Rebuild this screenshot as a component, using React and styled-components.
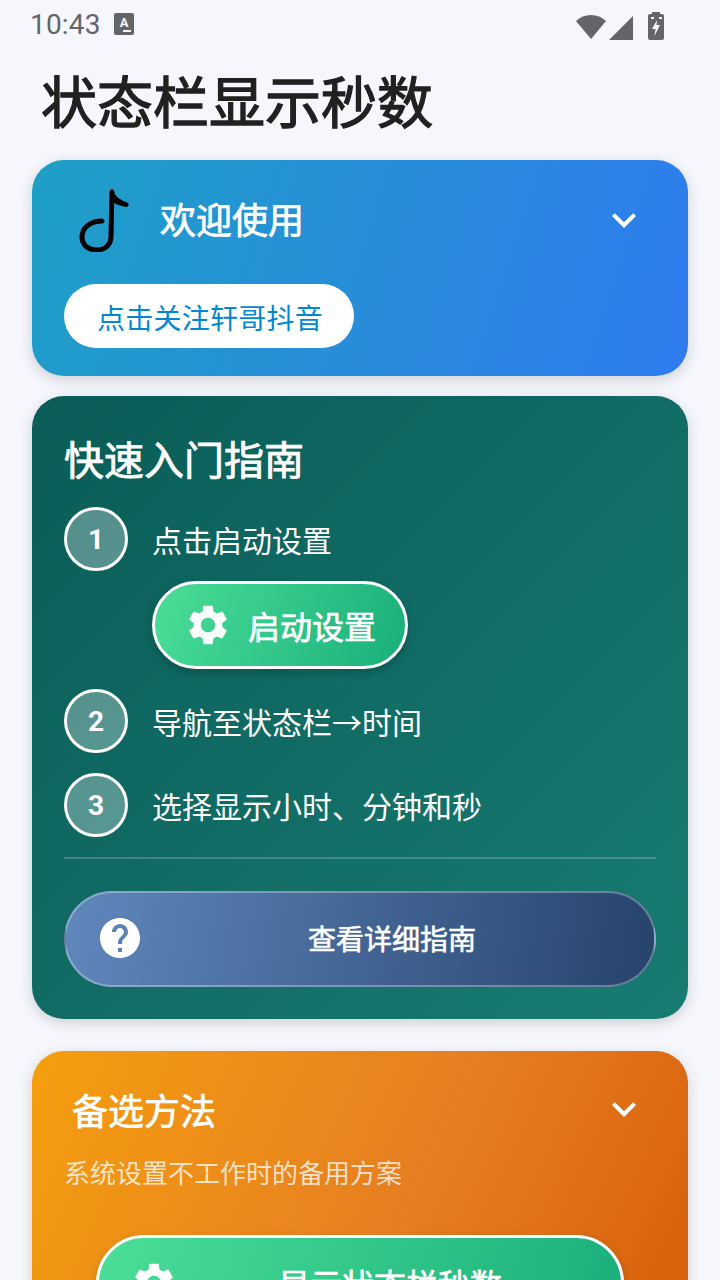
import React from 'react';
import styled, { createGlobalStyle } from 'styled-components';
import { MdSettings, MdHelp, MdExpandMore } from 'react-icons/md';

const GlobalStyle = createGlobalStyle`
  html, body {
    margin: 0;
    height: 1280px;
    overflow: hidden;
    background: #f5f7fc;
    font-family: Roboto, "Noto Sans CJK SC", sans-serif;
  }
  * { box-sizing: border-box; }
`;

const Page = styled.div`
  height: 1280px;
  overflow: hidden;
  background: #f5f7fc;
`;

// Status bar
const StatusBar = styled.div`
  height: 48px;
  display: flex;
  align-items: center;
  padding: 0 56px 0 30px;
  color: #646568;
`;
const Clock = styled.span`
  font-size: 28px;
  letter-spacing: 0.2px;
`;
const StatusRight = styled.div`
  margin-left: auto;
  display: flex;
  align-items: center;
`;

// the phone fakes its bold by stroking the regular weight
const Title = styled.h1`
  margin: 0;
  padding: 22px 0 0 41px;
  font-size: 56px;
  line-height: 68px;
  height: 112px;
  font-weight: 400;
  -webkit-text-stroke: 1.3px #212121;
  color: #212121;
`;

// Cards
const Card = styled.section`
  margin: ${p => p.$mt || 0}px 32px 0;
  border-radius: 32px;
  box-shadow: 0 4px 14px rgba(0, 0, 0, 0.16);
  background: ${p => p.$bg};
`;
const WelcomeCard = styled(Card)`
  padding: 28px 32px;
`;
const GuideCard = styled(Card)`
  padding: 32px;
`;
const BackupCard = styled(Card)`
  padding: 36px 32px 60px;
`;
const HeaderRow = styled.div`
  display: flex;
  align-items: center;
`;
const HeaderTitle = styled.h2`
  margin: 0 0 0 ${p => p.$ml}px;
  font-size: 36px;
  line-height: 48px;
  font-weight: 400;
  -webkit-text-stroke: 0.7px #fff;
  color: #fff;
  position: relative;
  top: 2px;
`;
const Chevron = styled(MdExpandMore)`
  margin-left: auto;
  margin-right: 8px;
  color: #fff;
  position: relative;
  top: ${p => p.$top || 0}px;
`;
const FollowButton = styled.button`
  display: block;
  margin-top: 32px;
  height: 64px;
  width: 290px;
  border: 0;
  border-radius: 32px;
  background: #fff;
  color: #0288d1;
  font: 400 28px Roboto, "Noto Sans CJK SC", sans-serif;
  letter-spacing: 0.25px;
  padding: 2px 0 0 2px;
`;

const GuideTitle = styled.h2`
  margin: 0 0 13px;
  padding-top: 1px;
  height: 66px;
  font-size: 40px;
  line-height: 66px;
  font-weight: 400;
  -webkit-text-stroke: 0.8px #fff;
  color: #fff;
`;
const Step = styled.div`
  display: flex;
  align-items: center;
  gap: 24px;
  margin-bottom: ${p => p.$mb}px;
`;
const StepNumber = styled.div`
  width: 64px;
  height: 64px;
  border-radius: 50%;
  border: 3px solid #fff;
  background: rgba(255, 255, 255, 0.3);
  color: #fff;
  font-size: 28px;
  font-weight: 700;
  display: flex;
  align-items: center;
  justify-content: center;
`;
const StepText = styled.span`
  font-size: 30px;
  color: #fff;
`;
const GreenButton = styled.button`
  display: flex;
  align-items: center;
  border: 3px solid #fff;
  border-radius: 48px;
  color: #fff;
  background: linear-gradient(${p => p.$angle}deg, #4ade97, #1aaf7b);
  box-shadow: 0 4px 10px rgba(0, 0, 0, 0.2);
  font: 400 32px Roboto, "Noto Sans CJK SC", sans-serif;
  -webkit-text-stroke: 0.7px #fff;
  padding: 0;
`;
const StartButton = styled(GreenButton)`
  width: 256px;
  height: 88px;
  margin: 0 0 20px 88px;
  padding-left: 29px;
  gap: 16px;
`;
const WideGreenButton = styled(GreenButton)`
  width: 528px;
  height: 96px;
  margin-left: 32px;
  padding-left: 31px;
  gap: 100px;
`;
const Divider = styled.div`
  height: 2px;
  background: rgba(255, 255, 255, 0.2);
  margin-bottom: 32px;
`;
const DetailButton = styled.button`
  position: relative;
  display: flex;
  align-items: center;
  justify-content: center;
  width: 100%;
  height: 96px;
  border: 2px solid rgba(255, 255, 255, 0.3);
  border-radius: 48px;
  background: linear-gradient(100deg, #6088bd, #27436c);
  color: #fff;
  font: 400 28px Roboto, "Noto Sans CJK SC", sans-serif;
  -webkit-text-stroke: 0.6px #fff;
  padding: 0 0 2px 64px;
`;
const HelpIcon = styled(MdHelp)`
  position: absolute;
  left: 30px;
  top: 21px;
`;
const Subtitle = styled.p`
  margin: 19px 0 41px;
  font-size: 26px;
  line-height: 40px;
  color: rgba(255, 255, 255, 0.75);
`;

const NoteIcon = () => (
  <svg width="64" height="64" viewBox="0 0 64 64" style={{ flexShrink: 0 }}>
    <path d="M34 33 C22 33 14 40 14 49 C14 57 20 62 29 62 C38 62 43 56 43 48 L44 4" fill="none" stroke="#000" strokeWidth="5" strokeLinecap="round" />
    <path d="M44 0 C46 8 52 12 60 15 Q62 18 58 19 C52 18 47 16 42 12 Z" fill="#000" />
  </svg>
);

const StatusIcons = () => (
  <StatusRight>
    <svg width="88" height="32" viewBox="0 0 88 32">
      <path d="M0 13 C8 5 22 5 30 13 L15 31 Z" fill="#646568" />
      <path d="M33 32 L57 8 L57 32 Z" fill="#646568" />
      <rect x="72" y="6" width="16" height="26" rx="2" fill="#646568" />
      <rect x="76" y="4" width="8" height="3" fill="#646568" />
      <path d="M81 12 L76 21 L79.5 21 L78.5 28 L84 17 L80.5 17 Z" fill="#f5f7fc" />
      <rect x="75" y="9" width="3" height="2" fill="#f5f7fc" />
      <rect x="83" y="9" width="3" height="2" fill="#f5f7fc" />
    </svg>
  </StatusRight>
);

const App = () => (
  <Page>
    <GlobalStyle />
    <StatusBar>
      <Clock>10:43</Clock>
      <svg width="20" height="22" viewBox="0 0 20 22" style={{ marginLeft: 13 }}>
        <rect width="20" height="22" rx="2" fill="#646568" />
        <text x="10" y="14" fontSize="13" fontWeight="700" fontFamily="Roboto" textAnchor="middle" fill="#f5f7fc">A</text>
        <rect x="9" y="17" width="8" height="2" fill="#f5f7fc" />
      </svg>
      <StatusIcons />
    </StatusBar>
    <Title>状态栏显示秒数</Title>

    <WelcomeCard $bg="linear-gradient(108deg, #1ea0c6, #2a88df 65%, #2f7bef)">
      <HeaderRow>
        <span style={{ width: 4 }} />
        <NoteIcon />
        <HeaderTitle $ml={28}>欢迎使用</HeaderTitle>
        <Chevron size={48} />
      </HeaderRow>
      <FollowButton>点击关注轩哥抖音</FollowButton>
    </WelcomeCard>

    <GuideCard $mt={20} $bg="linear-gradient(135deg, #0a5c57, #187c73)">
      <GuideTitle>快速入门指南</GuideTitle>
      <Step $mb={10}>
        <StepNumber>1</StepNumber>
        <StepText>点击启动设置</StepText>
      </Step>
      <StartButton $angle={110}>
        <MdSettings size={48} />
        启动设置
      </StartButton>
      <Step $mb={20}>
        <StepNumber>2</StepNumber>
        <StepText>导航至状态栏→时间</StepText>
      </Step>
      <Step $mb={20}>
        <StepNumber>3</StepNumber>
        <StepText>选择显示小时、分钟和秒</StepText>
      </Step>
      <Divider />
      <DetailButton>
        <HelpIcon size={48} />
        查看详细指南
      </DetailButton>
    </GuideCard>

    <BackupCard $mt={32} $bg="linear-gradient(115deg, #f59e0f, #e67e22 55%, #d65c08)">
      <HeaderRow>
        <HeaderTitle $ml={8}>备选方法</HeaderTitle>
        <Chevron size={48} $top={-2} />
      </HeaderRow>
      <Subtitle>系统设置不工作时的备用方案</Subtitle>
      <WideGreenButton $angle={105}>
        <MdSettings size={48} />
        显示状态栏秒数
      </WideGreenButton>
    </BackupCard>
  </Page>
);

export default App;
